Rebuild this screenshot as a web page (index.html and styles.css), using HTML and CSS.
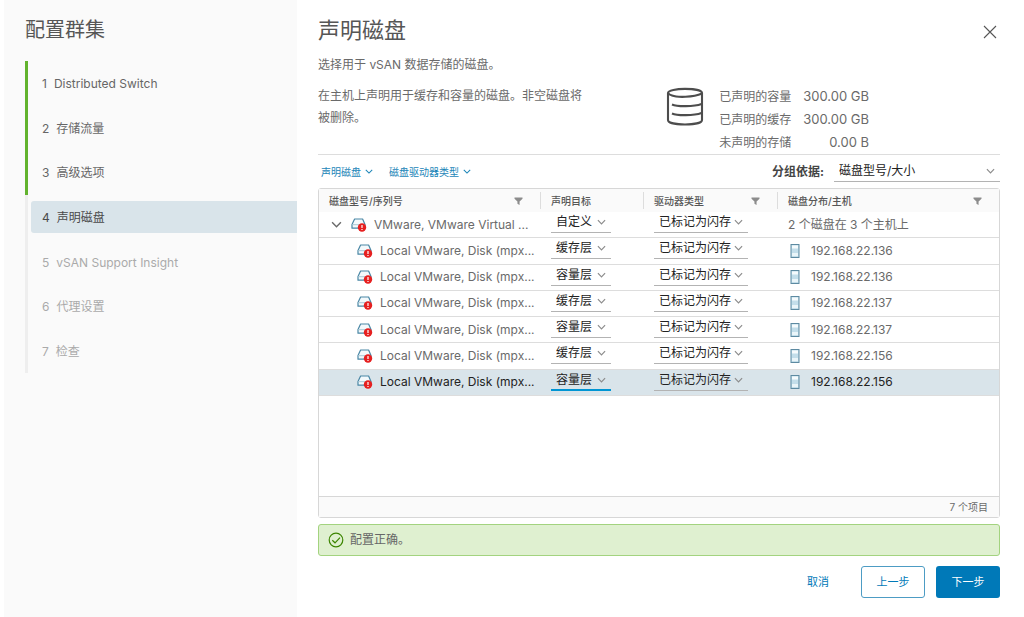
FILE: index.html
```html
<!DOCTYPE html>
<html lang="zh-CN">
<head>
    <meta charset="UTF-8">
    <title>配置群集</title>
    <meta name="viewport" content="width=device-width, initial-scale=1">
    <link rel="stylesheet" href="styles.css">
</head>
<body>
    <!-- Icons -->
    <svg class="sprite" width="0" height="0">
        <symbol id="chevron" viewBox="0 0 10 6">
            <path d="M1 1 L5 5 L9 1" fill="none" stroke="currentColor" stroke-width="1.3"/>
        </symbol>
        <symbol id="filter" viewBox="0 0 10 9">
            <path d="M0.5 0.5 H9.5 V2 L6.2 5 V9 L3.8 7.6 V5 L0.5 2 Z" fill="currentColor"/>
        </symbol>
        <symbol id="disk" viewBox="0 0 16 14">
            <path d="M3.6 1 H11.6 L14 6.5 V10.2 H1 V6.5 Z" fill="#f3f9fc" stroke="#4a87a5" stroke-width="1.2" stroke-linejoin="round"/>
            <path d="M1.2 6.7 H14" fill="none" stroke="#a9c8d6" stroke-width="1"/>
            <circle cx="11" cy="9.5" r="4.2" fill="#e62020"/>
            <path d="M11 7 V10" stroke="#fff" stroke-width="1.2"/>
            <path d="M11 10.9 V12.1" stroke="#fff" stroke-width="1.2"/>
        </symbol>
        <symbol id="host" viewBox="0 0 10 14">
            <rect x="1" y="0.5" width="8" height="13" fill="#c3deea" stroke="#5d8aa1"/>
            <rect x="2" y="1.5" width="6" height="3" fill="#f6fbfd"/>
            <rect x="2" y="9" width="6" height="3" fill="#eaf5f9"/>
        </symbol>
    </svg>

    <div class="wizard">
        <aside class="sidebar">
            <h1 class="sidebar-title">配置群集</h1>
            <ol class="steps">
                <li class="step done"><button class="step-button"><span>1</span><span>Distributed Switch</span></button></li>
                <li class="step done"><button class="step-button"><span>2</span><span>存储流量</span></button></li>
                <li class="step done"><button class="step-button"><span>3</span><span>高级选项</span></button></li>
                <li class="step current"><button class="step-button" aria-current="step"><span>4</span><span>声明磁盘</span></button></li>
                <li class="step"><button class="step-button" disabled><span>5</span><span>vSAN Support Insight</span></button></li>
                <li class="step"><button class="step-button" disabled><span>6</span><span>代理设置</span></button></li>
                <li class="step"><button class="step-button" disabled><span>7</span><span>检查</span></button></li>
            </ol>
        </aside>

        <main class="page">
            <header class="page-header">
                <h2 class="page-title">声明磁盘</h2>
                <button class="close" aria-label="关闭">
                    <svg width="14" height="14" viewBox="0 0 14 14"><path d="M1 1 L13 13 M13 1 L1 13" stroke="#565656" stroke-width="1.1"/></svg>
                </button>
            </header>
            <p class="subtitle">选择用于 vSAN 数据存储的磁盘。</p>

            <section class="summary">
                <p class="description">在主机上声明用于缓存和容量的磁盘。非空磁盘将被删除。</p>
                <div class="capacity">
                    <svg width="38" height="40" viewBox="0 0 38 40" fill="none" stroke="#4d4d4d" stroke-width="2.1">
                        <path d="M2 6 C2 0.5 36 0.5 36 6 V33 C36 39 2 39 2 33 Z"/>
                        <path d="M2 6 C3 7.5 4 8 6 8.5 C11 10.5 27 10.5 36 6.5"/>
                        <path d="M6 17.5 C11 19.8 28 19.8 35.5 17"/>
                        <path d="M6 26.5 C11 28.8 28 28.8 35.5 26"/>
                    </svg>
                    <dl class="totals">
                        <dt>已声明的容量</dt><dd>300.00 GB</dd>
                        <dt>已声明的缓存</dt><dd>300.00 GB</dd>
                        <dt>未声明的存储</dt><dd>0.00 B</dd>
                    </dl>
                </div>
            </section>

            <div class="toolbar">
                <button class="menu">声明磁盘 <svg width="8" height="5"><use href="#chevron"/></svg></button>
                <button class="menu">磁盘驱动器类型 <svg width="8" height="5"><use href="#chevron"/></svg></button>
                <label class="group-label" for="group">分组依据:</label>
                <span class="select group-select">
                    <select id="group"><option>磁盘型号/大小</option></select>
                    <svg width="9" height="6"><use href="#chevron"/></svg>
                </span>
            </div>

            <div class="datagrid">
                <table class="grid">
                    <colgroup>
                        <col class="col-model">
                        <col class="col-target">
                        <col class="col-type">
                        <col>
                    </colgroup>
                    <thead>
                        <tr>
                            <th><div class="head">磁盘型号/序列号<button class="filter" aria-label="筛选"><svg width="9" height="8"><use href="#filter"/></svg></button></div></th>
                            <th><div class="head">声明目标</div></th>
                            <th><div class="head">驱动器类型<button class="filter" aria-label="筛选"><svg width="9" height="8"><use href="#filter"/></svg></button></div></th>
                            <th><div class="head">磁盘分布/主机<button class="filter" aria-label="筛选"><svg width="9" height="8"><use href="#filter"/></svg></button></div></th>
                        </tr>
                    </thead>
                    <tbody>
                        <tr>
                            <td><div class="model parent"><button class="expand" aria-label="折叠"><svg width="11" height="7"><use href="#chevron"/></svg></button><svg width="16" height="14"><use href="#disk"/></svg>VMware, VMware Virtual ...</div></td>
                            <td class="edit"><span class="select"><select aria-label="声明目标"><option>自定义</option></select><svg width="9" height="6"><use href="#chevron"/></svg></span></td>
                            <td class="edit"><span class="select"><select aria-label="驱动器类型"><option>已标记为闪存</option></select><svg width="9" height="6"><use href="#chevron"/></svg></span></td>
                            <td><div class="host">2 个磁盘在 3 个主机上</div></td>
                        </tr>
                        <tr>
                            <td><div class="model"><svg width="16" height="14"><use href="#disk"/></svg>Local VMware, Disk (mpx...</div></td>
                            <td class="edit"><span class="select"><select aria-label="声明目标"><option>缓存层</option></select><svg width="9" height="6"><use href="#chevron"/></svg></span></td>
                            <td class="edit"><span class="select"><select aria-label="驱动器类型"><option>已标记为闪存</option></select><svg width="9" height="6"><use href="#chevron"/></svg></span></td>
                            <td><div class="host"><svg width="14" height="14"><use href="#host"/></svg>192.168.22.136</div></td>
                        </tr>
                        <tr>
                            <td><div class="model"><svg width="16" height="14"><use href="#disk"/></svg>Local VMware, Disk (mpx...</div></td>
                            <td class="edit"><span class="select"><select aria-label="声明目标"><option>容量层</option></select><svg width="9" height="6"><use href="#chevron"/></svg></span></td>
                            <td class="edit"><span class="select"><select aria-label="驱动器类型"><option>已标记为闪存</option></select><svg width="9" height="6"><use href="#chevron"/></svg></span></td>
                            <td><div class="host"><svg width="14" height="14"><use href="#host"/></svg>192.168.22.136</div></td>
                        </tr>
                        <tr>
                            <td><div class="model"><svg width="16" height="14"><use href="#disk"/></svg>Local VMware, Disk (mpx...</div></td>
                            <td class="edit"><span class="select"><select aria-label="声明目标"><option>缓存层</option></select><svg width="9" height="6"><use href="#chevron"/></svg></span></td>
                            <td class="edit"><span class="select"><select aria-label="驱动器类型"><option>已标记为闪存</option></select><svg width="9" height="6"><use href="#chevron"/></svg></span></td>
                            <td><div class="host"><svg width="14" height="14"><use href="#host"/></svg>192.168.22.137</div></td>
                        </tr>
                        <tr>
                            <td><div class="model"><svg width="16" height="14"><use href="#disk"/></svg>Local VMware, Disk (mpx...</div></td>
                            <td class="edit"><span class="select"><select aria-label="声明目标"><option>容量层</option></select><svg width="9" height="6"><use href="#chevron"/></svg></span></td>
                            <td class="edit"><span class="select"><select aria-label="驱动器类型"><option>已标记为闪存</option></select><svg width="9" height="6"><use href="#chevron"/></svg></span></td>
                            <td><div class="host"><svg width="14" height="14"><use href="#host"/></svg>192.168.22.137</div></td>
                        </tr>
                        <tr>
                            <td><div class="model"><svg width="16" height="14"><use href="#disk"/></svg>Local VMware, Disk (mpx...</div></td>
                            <td class="edit"><span class="select"><select aria-label="声明目标"><option>缓存层</option></select><svg width="9" height="6"><use href="#chevron"/></svg></span></td>
                            <td class="edit"><span class="select"><select aria-label="驱动器类型"><option>已标记为闪存</option></select><svg width="9" height="6"><use href="#chevron"/></svg></span></td>
                            <td><div class="host"><svg width="14" height="14"><use href="#host"/></svg>192.168.22.156</div></td>
                        </tr>
                        <tr class="selected">
                            <td><div class="model"><svg width="16" height="14"><use href="#disk"/></svg>Local VMware, Disk (mpx...</div></td>
                            <td class="edit"><span class="select active"><select aria-label="声明目标"><option>容量层</option></select><svg width="9" height="6"><use href="#chevron"/></svg></span></td>
                            <td class="edit"><span class="select"><select aria-label="驱动器类型"><option>已标记为闪存</option></select><svg width="9" height="6"><use href="#chevron"/></svg></span></td>
                            <td><div class="host"><svg width="14" height="14"><use href="#host"/></svg>192.168.22.156</div></td>
                        </tr>
                    </tbody>
                </table>
                <div class="grid-footer">7 个项目</div>
            </div>

            <div class="alert" role="status">
                <svg width="16" height="16" viewBox="0 0 16 16" fill="none" stroke="#3c8500" stroke-width="1.2">
                    <circle cx="8" cy="8" r="6.8"/>
                    <path d="M4.3 8.2 L7 10.8 L12 5.6"/>
                </svg>
                配置正确。
            </div>

            <footer class="actions">
                <button class="btn btn-link">取消</button>
                <button class="btn btn-outline">上一步</button>
                <button class="btn btn-primary">下一步</button>
            </footer>
        </main>
    </div>
</body>
</html>
```
FILE: styles.css
```css
* {
    box-sizing: border-box;
}

body {
    margin: 0;
    background-color: #fff;
    color: #6a6a6a;
    font-family: Inter, "Noto Sans CJK SC", sans-serif;
    font-size: 12px;
    font-weight: 400;
    line-height: 20px;
}

h1, h2, p, ol, dl, dd {
    margin: 0;
    padding: 0;
    font-weight: 400;
}

button, select {
    padding: 0;
    border: none;
    border-radius: 0;
    background: none;
    color: inherit;
    font: inherit;
    cursor: pointer;
}

svg {
    display: block;
    flex: none;
}

.sprite {
    position: absolute;
}

.wizard {
    display: flex;
    min-height: 100vh;
    padding-left: 4px;
}

/* Left navigation */
.sidebar {
    flex: none;
    width: 293px;
    padding: 16px 0 0 21px;
    background-color: #fafafa;
}

.sidebar-title {
    margin-bottom: 17px;
    color: #565656;
    font-size: 20px;
    line-height: 28px;
}

.steps {
    display: grid;
    grid-auto-rows: 1fr;
    min-height: 312px;
    list-style: none;
}

.step {
    display: flex;
    align-items: center;
    padding-left: 3px;
    border-left: 3px solid #eee;
    color: #666;
}

.step.done {
    border-color: #62b32e;
}

.step-button {
    display: flex;
    flex: 1;
    align-items: center;
    gap: 7px;
    height: 32px;
    padding: 2px 0 0 11px;
    border-radius: 3px 0 0 3px;
    text-align: left;
}

.step-button:disabled {
    color: #aaa;
    cursor: default;
}

.step.current .step-button {
    background-color: #d9e4ea;
    color: #4a4a4a;
}

/* Wizard page */
.page {
    display: flex;
    flex: 1;
    flex-direction: column;
    min-width: 0;
    padding: 16px 24px 19px 21px;
}

.page-header {
    display: flex;
    align-items: center;
    justify-content: space-between;
}

.page-title {
    color: #565656;
    font-size: 22px;
    line-height: 28px;
}

.close {
    margin: 4px 3px 0 0;
}

.subtitle {
    margin: 11px 0 10px;
}

.summary {
    display: flex;
    justify-content: space-between;
    border-bottom: 1px solid #ddd;
}

.description {
    width: 274px;
    line-height: 22px;
}

.capacity {
    display: flex;
    gap: 15px;
    padding-right: 131px;
}

.capacity > svg {
    margin-top: 2px;
}

.totals {
    display: grid;
    grid-template-columns: auto auto;
    column-gap: 12px;
    line-height: 23px;
}

.totals dd {
    font-size: 13px;
    text-align: right;
}

.toolbar {
    display: flex;
    align-items: center;
    height: 33px;
    padding-left: 3px;
}

.menu {
    display: flex;
    align-items: center;
    gap: 4px;
    margin-right: 16px;
    color: #1b85b8;
    font-size: 10px;
}

.group-label {
    margin: 0 10px 0 auto;
    color: #454545;
    font-weight: 700;
}

/* Underlined drop-down, the arrow shares the cell with the select */
.select {
    display: grid;
    align-items: center;
    height: 21px;
    border-bottom: 1px solid #b3b3b3;
    color: #222;
}

.select select {
    grid-area: 1 / 1;
    width: 100%;
    height: 20px;
    padding-left: 5px;
    appearance: none;
    outline: none;
}

.select svg {
    grid-area: 1 / 1;
    justify-self: end;
    margin-right: 5px;
    color: #8c8c8c;
    pointer-events: none;
}

.select.active {
    border-bottom: 2px solid #0095d3;
}

.group-select {
    width: 166px;
}

/* Datagrid */
.datagrid {
    display: flex;
    flex: 1;
    flex-direction: column;
    border: 1px solid #d7d7d7;
    border-radius: 3px;
}

.grid {
    width: 100%;
    height: 207px;
    border-collapse: separate;
    border-spacing: 0;
    table-layout: fixed;
}

.col-model {
    width: 221px;
}

.col-target {
    width: 103px;
}

.col-type {
    width: 134px;
}

.grid th {
    height: 23px;
    padding: 0;
    background-color: #fafafa;
    color: #565656;
    font-size: 10px;
    font-weight: 500;
    text-align: left;
}

.head {
    display: flex;
    align-items: center;
    justify-content: space-between;
    height: 17px;
    padding: 0 17px 0 10px;
    border-left: 1px solid #ddd;
}

.grid th:first-child .head {
    padding-left: 9px;
    border-left-color: transparent;
}

.filter {
    color: #8c8c8c;
}

.grid td {
    padding: 0;
    border-bottom: 1px solid #ddd;
    line-height: 16px;
    white-space: nowrap;
}

.grid td.edit {
    padding: 0 29px 0 11px;
    vertical-align: top;
}

.grid td.edit:nth-child(2) {
    padding-right: 32px;
}

.grid .selected td {
    background-color: #d9e4ea;
    color: #222;
}

.model {
    display: flex;
    align-items: center;
    gap: 7px;
    padding-left: 38px;
}

.model.parent {
    padding-left: 12px;
}

.expand {
    margin-right: 2px;
}

.host {
    display: flex;
    align-items: center;
    gap: 9px;
    padding-left: 11px;
}

.grid-footer {
    margin-top: auto;
    padding-right: 11px;
    border-top: 1px solid #d7d7d7;
    background-color: #fafafa;
    font-size: 10px;
    text-align: right;
}

.alert {
    display: flex;
    align-items: center;
    gap: 6px;
    height: 32px;
    margin-top: 6px;
    padding-left: 9px;
    border: 1px solid #a3d37f;
    border-radius: 3px;
    background-color: #dff0d0;
    color: #666;
}

.actions {
    display: flex;
    justify-content: flex-end;
    gap: 11px;
    margin-top: 10px;
}

.btn {
    min-width: 64px;
    height: 32px;
    border: 1px solid transparent;
    border-radius: 3px;
    color: #0079b8;
    font-size: 11px;
}

.btn-outline {
    border-color: #4d9cc4;
}

.btn-primary {
    background-color: #0079b8;
    color: #fff;
}
```
